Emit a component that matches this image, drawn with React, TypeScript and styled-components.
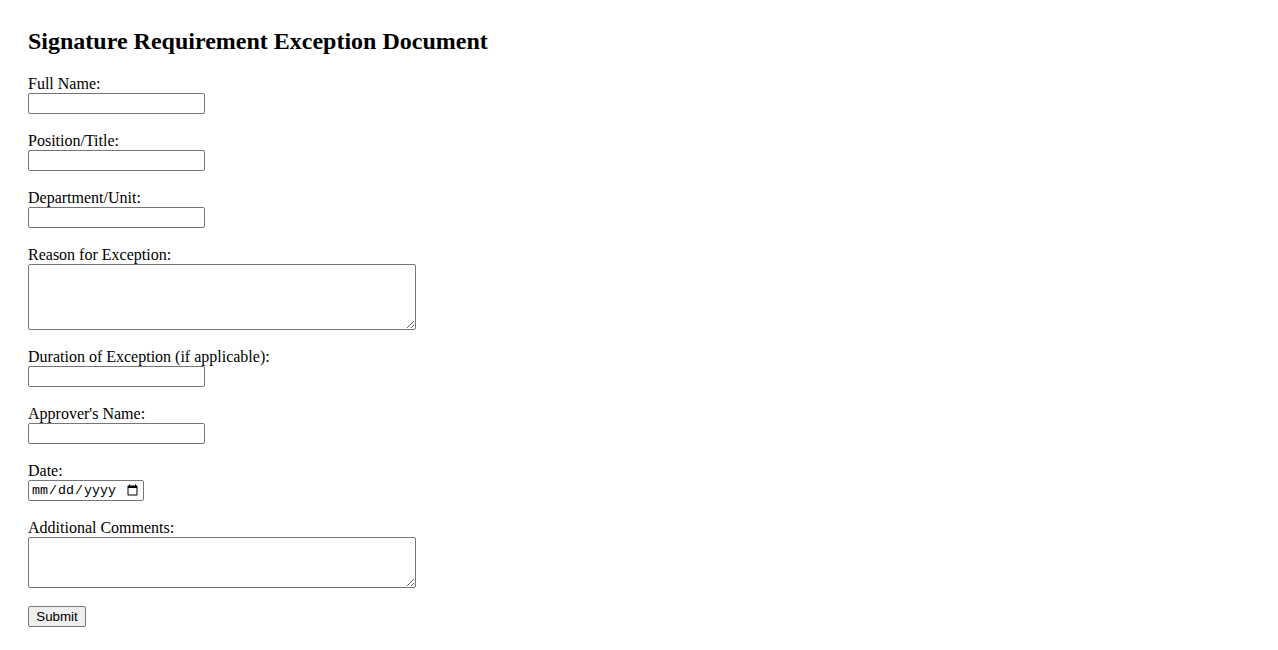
import * as React from 'react';
import styled, { createGlobalStyle } from 'styled-components';

const GlobalStyle = createGlobalStyle`
  html, body {
    margin: 0;
    padding: 0;
    background: #ffffff;
  }

  body {
    font-family: "Liberation Serif", "Times New Roman", serif;
    font-size: 16px;
    color: #000000;
  }
`;

const Page = styled.div`
  padding: 28px;
`;

const Title = styled.h2`
  margin: 0 0 21px;
  font-size: 24px;
  line-height: 26px;
  font-weight: bold;
`;

const Form = styled.form`
  display: flex;
  flex-direction: column;
  align-items: flex-start;
`;

const Field = styled.div`
  display: flex;
  flex-direction: column;
  align-items: flex-start;
  margin-bottom: 18px;
`;

const Label = styled.label`
  display: block;
  font-size: 16px;
  line-height: 18px;
`;

const controlBase = `
  box-sizing: border-box;
  margin: 0;
  border: 1px solid #767676;
  border-radius: 2px;
  background: #ffffff;
  color: #000000;
`;

const TextInput = styled.input<{ $width?: number }>`
  ${controlBase}
  width: ${props => props.$width || 177}px;
  height: 21px;
  padding: 1px 2px;
  font-family: "Liberation Sans", Arial, sans-serif;
  font-size: 13.33px;
`;

const DateInput = styled.input`
  ${controlBase}
  width: 116px;
  height: 21px;
  padding: 1px 2px;
  font-family: "Liberation Mono", "DejaVu Sans Mono", monospace;
  font-size: 13.33px;
`;

const TextArea = styled.textarea<{ $height: number }>`
  ${controlBase}
  display: block;
  width: 388px;
  height: ${props => props.$height}px;
  padding: 2px;
  font-family: "Liberation Mono", monospace;
  font-size: 13.33px;
  resize: both;
`;

const SubmitButton = styled.button`
  box-sizing: border-box;
  width: 58px;
  height: 21px;
  margin: 0;
  padding: 1px 6px;
  border: 1px solid #767676;
  border-radius: 2px;
  background: #efefef;
  color: #000000;
  font-family: "Liberation Sans", Arial, sans-serif;
  font-size: 13.33px;
  line-height: 15px;
`;

const fields: { id: string; label: string; kind: 'text' | 'area' | 'date'; height?: number }[] = [
  { id: 'fullName', label: 'Full Name:', kind: 'text' },
  { id: 'position', label: 'Position/Title:', kind: 'text' },
  { id: 'department', label: 'Department/Unit:', kind: 'text' },
  { id: 'reason', label: 'Reason for Exception:', kind: 'area', height: 66 },
  { id: 'duration', label: 'Duration of Exception (if applicable):', kind: 'text' },
  { id: 'approver', label: "Approver's Name:", kind: 'text' },
  { id: 'date', label: 'Date:', kind: 'date' },
  { id: 'comments', label: 'Additional Comments:', kind: 'area', height: 51 },
];

const App = () => {
  return (
    <Page>
      <GlobalStyle />
      <Title>Signature Requirement Exception Document</Title>
      <Form onSubmit={e => e.preventDefault()}>
        {fields.map(field => (
          <Field key={field.id}>
            <Label htmlFor={field.id}>{field.label}</Label>
            {field.kind === 'text' && <TextInput id={field.id} type="text" />}
            {field.kind === 'date' && <DateInput id={field.id} type="date" />}
            {field.kind === 'area' && <TextArea id={field.id} $height={field.height || 51} />}
          </Field>
        ))}
        <SubmitButton type="submit">Submit</SubmitButton>
      </Form>
    </Page>
  );
};

export default App;
